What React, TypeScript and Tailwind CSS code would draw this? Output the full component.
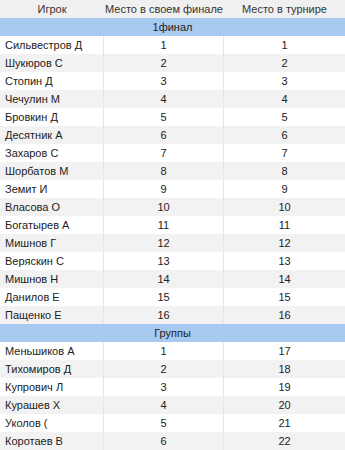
const finals = [
  ['Сильвестров Д', '1', '1'],
  ['Шукюров С', '2', '2'],
  ['Стопин Д', '3', '3'],
  ['Чечулин М', '4', '4'],
  ['Бровкин Д', '5', '5'],
  ['Десятник А', '6', '6'],
  ['Захаров С', '7', '7'],
  ['Шорбатов М', '8', '8'],
  ['Земит И', '9', '9'],
  ['Власова О', '10', '10'],
  ['Богатырев А', '11', '11'],
  ['Мишнов Г', '12', '12'],
  ['Веряскин С', '13', '13'],
  ['Мишнов Н', '14', '14'],
  ['Данилов Е', '15', '15'],
  ['Пащенко Е', '16', '16'],
]

const groups = [
  ['Меньшиков А', '1', '17'],
  ['Тихомиров Д', '2', '18'],
  ['Купрович Л', '3', '19'],
  ['Курашев Х', '4', '20'],
  ['Уколов (', '5', '21'],
  ['Коротаев В', '6', '22'],
]

function Row({ cells, index }: { cells: string[]; index: number }) {
  return (
    <div className={`grid grid-cols-[104px_120px_1fr] h-[18px] items-center ${index % 2 === 0 ? 'bg-white' : 'bg-[#f2f2f2]'}`}>
      <div className="pl-[5px] h-full flex items-center border-r border-[#e6e6e6]">{cells[0]}</div>
      <div className="text-center h-full flex items-center justify-center border-r border-[#e6e6e6]">{cells[1]}</div>
      <div className="text-center">{cells[2]}</div>
    </div>
  )
}

function Band({ title }: { title: string }) {
  return <div className="h-[18px] bg-[#a8c9f0] flex items-center justify-center">{title}</div>
}

export default function App() {
  return (
    <div className="w-[345px] h-[450px] overflow-hidden bg-white text-[#222] text-[11px] leading-none whitespace-nowrap" style={{ fontFamily: '"Liberation Sans", Arial, sans-serif' }}>
      <div className="grid grid-cols-[104px_120px_1fr] h-[18px] items-center bg-[#f0f0f0] text-[#333]">
        <div className="text-center">Игрок</div>
        <div className="text-center">Место в своем финале</div>
        <div className="text-center">Место в турнире</div>
      </div>
      <Band title="1финал" />
      {finals.map((r, i) => (
        <Row key={r[0]} cells={r} index={i} />
      ))}
      <Band title="Группы" />
      {groups.map((r, i) => (
        <Row key={r[0]} cells={r} index={i} />
      ))}
    </div>
  )
}
